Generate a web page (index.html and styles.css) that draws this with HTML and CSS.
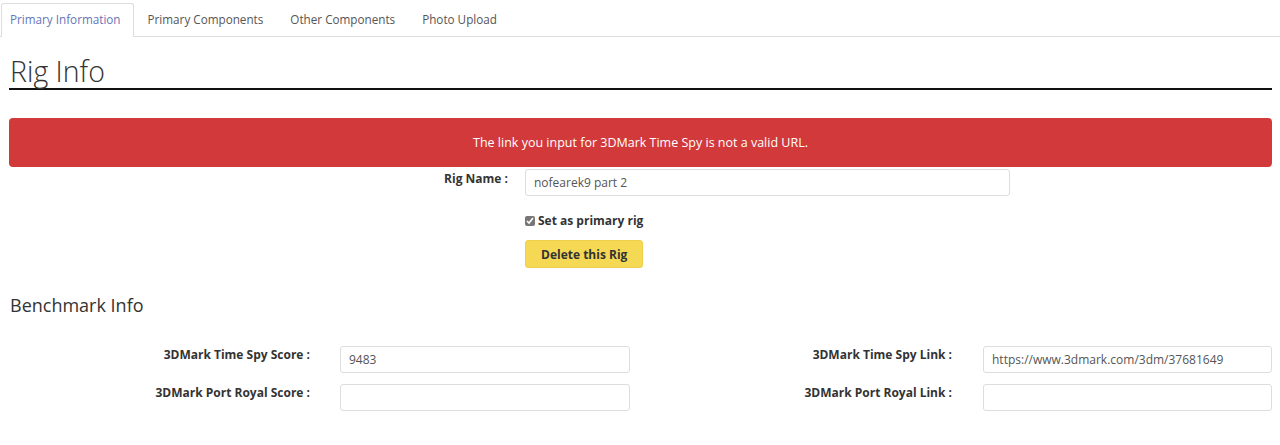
FILE: index.html
```html
<!DOCTYPE html>
<html>
<head>
<meta charset="utf-8">
<link rel="stylesheet" href="styles.css">
</head>
<body>
<nav class="tabs">
  <a class="tab active">Primary Information</a>
  <a class="tab">Primary Components</a>
  <a class="tab">Other Components</a>
  <a class="tab">Photo Upload</a>
</nav>
<main class="page">
  <h1 class="title">Rig Info</h1>
  <div class="alert">The link you input for 3DMark Time Spy is not a valid URL.</div>
  <div class="rig-row">
    <label class="lbl rig-lbl">Rig Name :</label>
    <div class="field"><input class="input" type="text" value="nofearek9 part 2"></div>
  </div>
  <div class="rig-row">
    <span></span>
    <label class="check"><input type="checkbox" checked class="cb"> Set as primary rig</label>
  </div>
  <div class="rig-row">
    <span></span>
    <div><button class="btn">Delete this Rig</button></div>
  </div>
  <h2 class="subtitle">Benchmark Info</h2>
  <div class="bench">
    <label class="lbl bl1">3DMark Time Spy Score :</label>
    <input class="input" type="text" value="9483">
    <label class="lbl bl2">3DMark Time Spy Link :</label>
    <input class="input" type="text" value="https://www.3dmark.com/3dm/37681649">
    <label class="lbl bl1">3DMark Port Royal Score :</label>
    <input class="input" type="text" value="">
    <label class="lbl bl2">3DMark Port Royal Link :</label>
    <input class="input" type="text" value="">
  </div>
</main>
</body>
</html>
```
FILE: styles.css
```css
* { box-sizing: border-box; }
html, body { margin: 0; padding: 0; background: #fff; }
body {
  font-family: "Open Sans", "Noto Sans", sans-serif;
  font-size: 12px;
  color: #333;
}
.tabs {
  display: flex;
  border-bottom: 1px solid #ddd;
  padding-top: 3px;
  padding-left: 1px;
}
.tab {
  display: block;
  padding: 6px 12px 8px 13px;
  line-height: 18px;
  font-size: 11.7px;
  color: #555;
  border: 1px solid transparent;
  border-bottom: 0;
  margin-bottom: -1px;
  border-radius: 3px 3px 0 0;
}
.tab.active {
  color: #6675b8;
  border-color: #ddd;
  background: #fff;
  padding-bottom: 9px;
  padding-left: 8px;
  padding-right: 12px;
}
.page { padding: 0 8px 0 9px; }
.title {
  margin: 17px 0 0;
  font-size: 28.5px;
  font-weight: 300;
  line-height: 34px;
  color: #333;
  padding-left: 1px;
  padding-bottom: 0;
  border-bottom: 2px solid #111;
}
.alert {
  margin-top: 28px;
  height: 49px;
  font-size: 12.5px;
  background: #d2393a;
  border-radius: 4px;
  color: #fff;
  display: flex;
  align-items: center;
  justify-content: center;
}
.rig-row {
  display: grid;
  grid-template-columns: 516px 485px;
}
.lbl {
  font-weight: 700;
  text-align: right;
  color: #333;
  line-height: 18px;
}
.rig-lbl { padding-right: 17px; padding-top: 3px; }
.input {
  display: block;
  width: 100%;
  height: 27px;
  border: 1px solid #ddd;
  border-radius: 3px;
  padding: 0 8px;
  font-family: inherit;
  font-size: 12px;
  color: #555;
  background: #fff;
  outline: none;
}
.field { margin-top: 2px; }
.check {
  display: flex;
  align-items: center;
  gap: 3px;
  font-weight: 700;
  margin-top: 16px;
  line-height: 18px;
}
.cb { margin: 0; width: 10px; height: 10px; accent-color: #777; }
.btn {
  margin-top: 10px;
  height: 28px;
  padding: 0 15px;
  background: #f5d955;
  border: 1px solid #efd04c;
  border-radius: 3px;
  font-family: inherit;
  font-size: 12px;
  font-weight: 700;
  color: #333;
}
.subtitle {
  margin: 24px 0 0 1px;
  font-size: 18px;
  font-weight: 400;
  line-height: 26px;
  color: #333;
}
.bench {
  margin-top: 28px;
  display: grid;
  grid-template-columns: 331px 290px 353px 289px;
  row-gap: 11px;
}
.bl1 { padding-right: 30px; padding-top: 0; }
.bl2 { padding-right: 31px; padding-top: 0; }
```
